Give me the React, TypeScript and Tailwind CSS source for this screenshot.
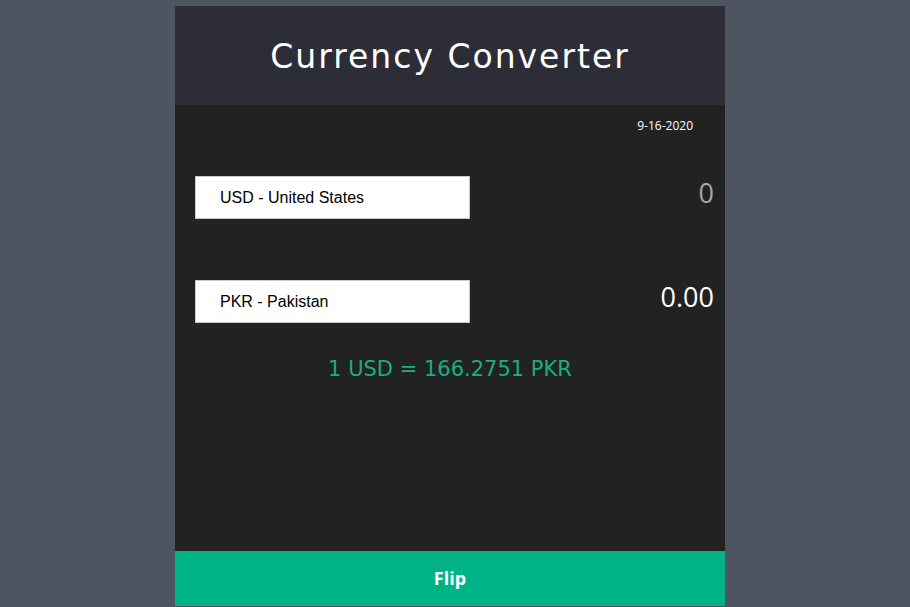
import React from 'react';

const rows = [
  { id: 'from', label: 'USD - United States', value: '0', muted: true },
  { id: 'to', label: 'PKR - Pakistan', value: '0.00', muted: false },
];

export default function App() {
  return (
    <div className="min-h-screen bg-[#4f5560] flex justify-center pt-[6px] pr-[10px]">
      <div className="w-[550px] h-[600px] flex flex-col bg-[#222222]">
        <header className="h-[99px] bg-[#2d2d37] flex items-center justify-center pt-[3px]">
          <h1 className="text-white text-[33px] font-['DejaVu_Sans',sans-serif] tracking-[2px]">
            Currency Converter
          </h1>
        </header>

        <main className="flex-1 flex flex-col pl-[20px] pr-[11px]">
          <div className="pt-[12px] pr-[21px] text-right text-white text-[12px] font-['Open_Sans',sans-serif]">
            9-16-2020
          </div>

          <div className="mt-[41px] flex flex-col gap-[61px]">
            {rows.map((row) => (
              <div key={row.id} className="flex items-center justify-between">
                <select
                  defaultValue={row.label}
                  className="appearance-none w-[275px] h-[43px] bg-white border border-[#c8c8c8] pl-[24px] text-[16px] text-black font-['Liberation_Sans',sans-serif] outline-none"
                >
                  <option>{row.label}</option>
                </select>
                <span
                  className={`-mt-[8px] text-[27px] font-['Open_Sans',sans-serif] ${
                    row.muted ? 'text-[#a3a7ab]' : 'text-white'
                  }`}
                >
                  {row.value}
                </span>
              </div>
            ))}
          </div>

          <p className="mt-[31px] pr-[9px] text-center text-[21px] text-[#19ad82] font-['DejaVu_Sans',sans-serif]">
            1 USD = 166.2751 PKR
          </p>
        </main>

        <button className="h-[55px] bg-[#00b386] text-white font-bold text-[18px] font-['Open_Sans',sans-serif]">
          Flip
        </button>
      </div>
    </div>
  );
}
